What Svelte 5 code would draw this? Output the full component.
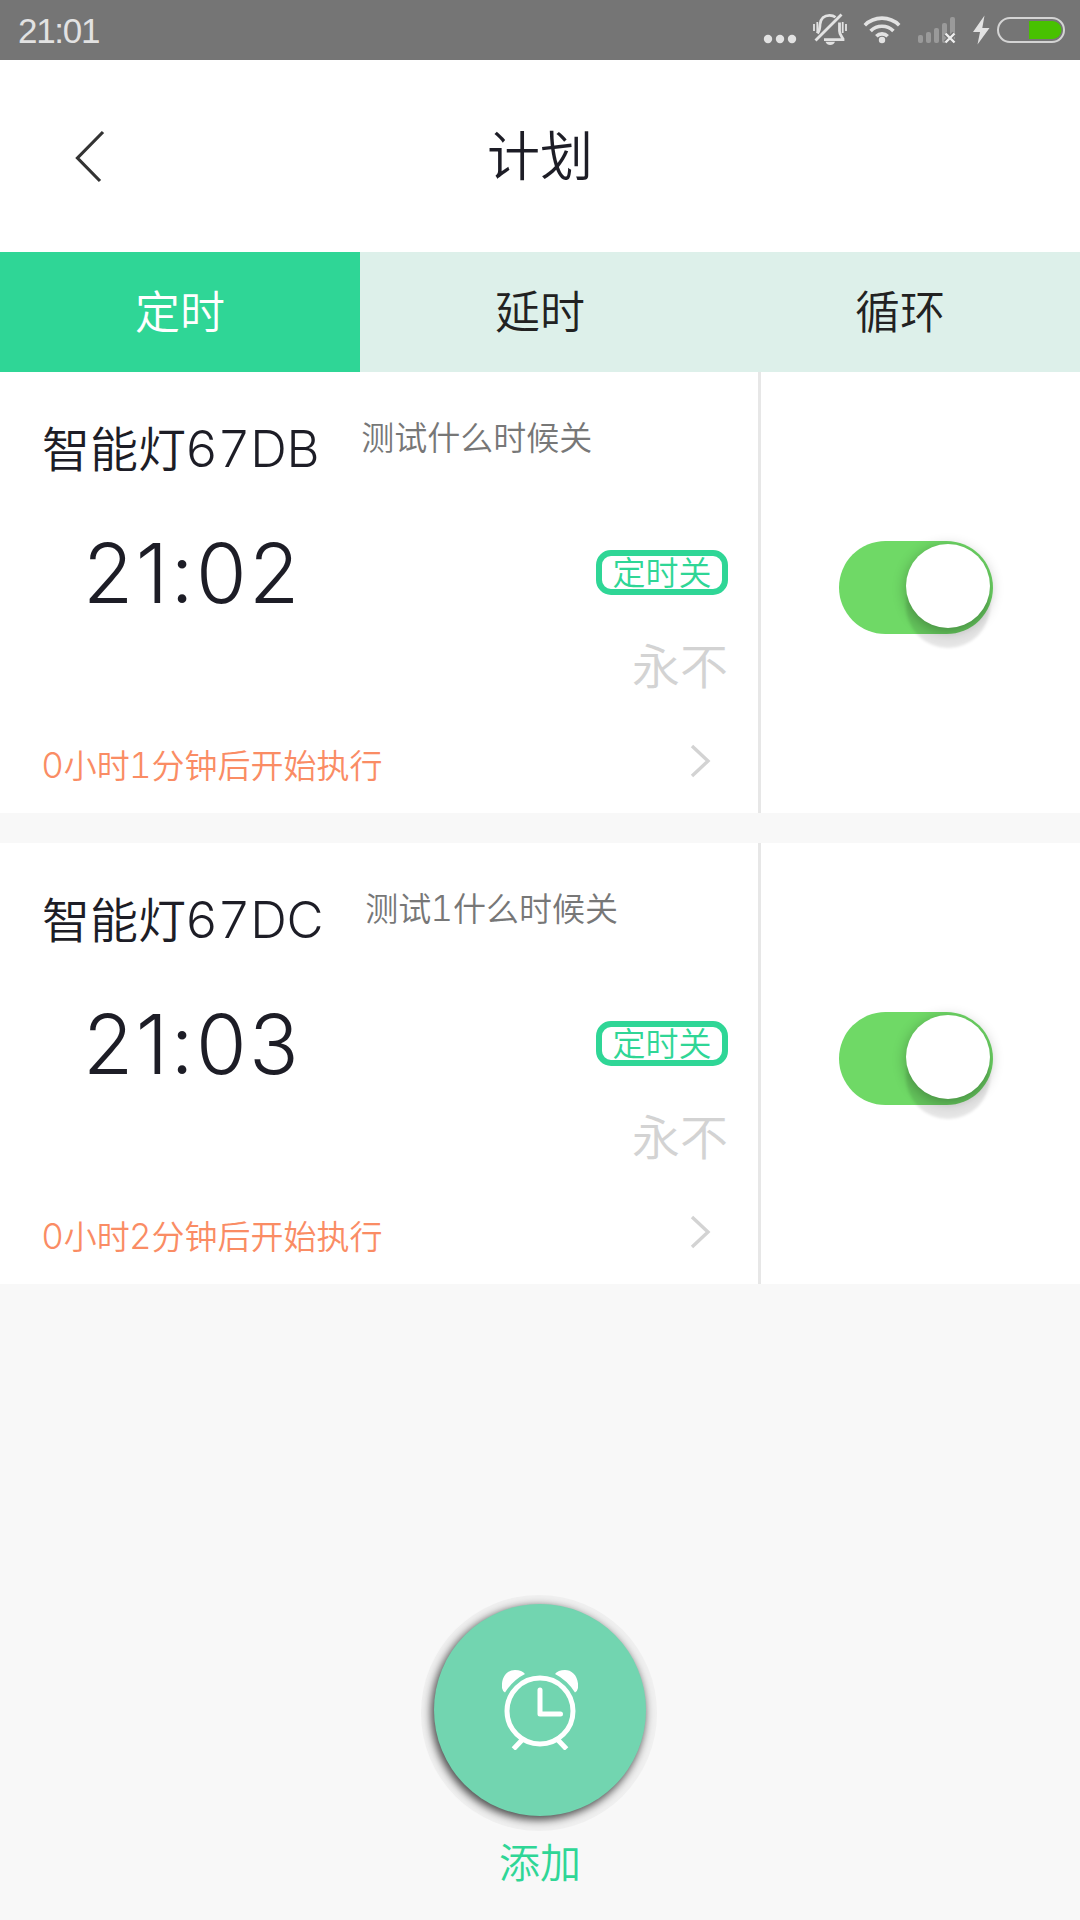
<script>
  const tabs = ['定时', '延时', '循环'];
  let active = $state(0);

  let plans = $state([
    { name: '智能灯67DB', note: '测试什么时候关', time: '21:02', action: '定时关', repeat: '永不', status: '0小时1分钟后开始执行', on: true },
    { name: '智能灯67DC', note: '测试1什么时候关', time: '21:03', action: '定时关', repeat: '永不', status: '0小时2分钟后开始执行', on: true }
  ]);

  // Latin runs use their own face and size beside the Chinese glyphs
  function runs(text) {
    return text.match(/[0-9A-Za-z]+|[^0-9A-Za-z]+/g).map((t) => ({ t, latin: /^[0-9A-Za-z]/.test(t) }));
  }
</script>

{#snippet mixed(text)}{#each runs(text) as r}{#if r.latin}<span class="latin">{r.t}</span>{:else}{r.t}{/if}{/each}{/snippet}

<div class="screen">
  <div class="status">
    <span class="clock">21:01</span>
    <svg class="sys" viewBox="740 0 340 60" width="340" height="60">
      <g fill="#e2e2e2">
        <circle cx="768" cy="39" r="4.2" /><circle cx="780" cy="39" r="4.2" /><circle cx="792" cy="39" r="4.2" />
        <path d="M825.500 41.700h9.500q-1.500 3.300-4.800 3.300t-4.700-3.300z" />
        <circle cx="882" cy="40" r="3.200" />
        <path d="M984.500 15.500L973 32h7l-2.500 12.500L989.500 28h-7.200z" />
      </g>
      <g fill="none" stroke="#e2e2e2" stroke-width="2.800">
        <path d="M817.500 33.500C820 30 820 27 820 24.500C820.500 18.500 824.500 15.300 829.500 15.300C832 15.300 834 16 835.500 17.300M839.500 22.500V31C839.500 34.500 841.500 36 843 38.900V39.600H824" />
        <path d="M841.500 14.500L815.500 40.500" />
        <path d="M814 24v7M817.300 22v11M842.700 22v11M846 24v7" stroke-width="1.800" />
        <path d="M864.800 25.200a24.500 24.500 0 0 1 34.400 0M870.600 31a16.200 16.200 0 0 1 22.800 0M876.300 36.200a8.200 8.200 0 0 1 11.400 0" stroke-width="3.600" />
      </g>
      <g fill="#9a9a9a">
        <rect x="918" y="35" width="5" height="8" rx="2" />
        <rect x="926" y="32" width="5" height="11" rx="2" />
        <rect x="934" y="28" width="5" height="15" rx="2" />
        <rect x="942" y="23" width="5" height="20" rx="2" />
        <rect x="950" y="17" width="5" height="26" rx="2" />
      </g>
      <path d="M945.500 33.500l9 9m0-9l-9 9" stroke="#757575" stroke-width="5" />
      <path d="M945.500 33.500l9 9m0-9l-9 9" stroke="#eee" stroke-width="2.400" />
      <rect x="998" y="18" width="66" height="24" rx="12" fill="none" stroke="#d4d4d4" stroke-width="2" />
      <path d="M1029 21h23.500a9 9 0 0 1 0 18H1029z" fill="#48c100" />
    </svg>
  </div>

  <header>
    <button class="back" aria-label="返回">
      <svg viewBox="0 0 32 56" width="32" height="56"><path d="M29 4L3.500 30L26 53" fill="none" stroke="#333" stroke-width="3.200" /></svg>
    </button>
    <h1>计划</h1>
  </header>

  <nav>
    {#each tabs as tab, i}
      <button class="tab" class:active={active === i} onclick={() => (active = i)}>{tab}</button>
    {/each}
  </nav>

  <main>
    {#each plans as plan}
      <section class="card">
        <div class="info">
          <div class="heading">
            <span class="name">{@render mixed(plan.name)}</span>
            <span class="note">{@render mixed(plan.note)}</span>
          </div>
          <div class="middle">
            <span class="time">{plan.time}</span>
            <span class="badge">{plan.action}</span>
          </div>
          <div class="repeat">{plan.repeat}</div>
          <div class="foot">
            <span class="eta">{@render mixed(plan.status)}</span>
            <svg viewBox="0 0 22 34" width="22" height="34"><path d="M2 2L18 17L2 32" fill="none" stroke="#d3d3d3" stroke-width="3.400" /></svg>
          </div>
        </div>
        <div class="control">
          <button class="switch" class:off={!plan.on} aria-label="开关" onclick={() => (plan.on = !plan.on)}>
            <span class="knob"></span>
          </button>
        </div>
      </section>
    {/each}
  </main>

  <footer>
    <button class="add" aria-label="添加">
      <svg viewBox="502 1670 76 80" width="76" height="80">
        <g fill="#fff">
          <path d="M502 1688C501 1676 508 1670 515 1670Q522 1670 525 1674Q513 1680 505 1692.500Q502.500 1691 502 1688z" />
          <path d="M578 1688C579 1676 572 1670 565 1670Q558 1670 555 1674Q567 1680 575 1692.500Q577.500 1691 578 1688z" />
        </g>
        <g fill="none" stroke="#fff" stroke-width="5">
          <circle cx="540" cy="1711" r="33" />
          <path d="M540 1690V1714H560.500" stroke-linecap="round" stroke-linejoin="round" />
          <path d="M523 1739L513.500 1749M557 1739L566.500 1749" />
        </g>
      </svg>
    </button>
    <span class="addlabel">添加</span>
  </footer>
</div>

<style>
  :global(body) { margin: 0; background: #f8f8f8; }
  .screen {
    width: 1080px; height: 1920px; display: flex; flex-direction: column; overflow: hidden;
    background: #f8f8f8; color: #1d1d26;
    font-family: "Noto Sans CJK SC", sans-serif; font-weight: 350;
  }
  button { border: 0; padding: 0; margin: 0; background: none; font: inherit; color: inherit; }
  svg { display: block; }
  .status { height: 60px; background: #757575; display: flex; justify-content: space-between; align-items: center; flex: none; }
  .clock { padding-left: 18px; font: 400 35px/60px "Liberation Sans", sans-serif; color: #e2e2e2; letter-spacing: -1.3px; padding-top: 1px; }
  header { height: 192px; background: #fff; display: grid; grid-template-columns: 180px 1fr 180px; align-items: center; flex: none; }
  .back { justify-self: start; margin-left: 74px; }
  h1 { margin: 0; padding-bottom: 6px; text-align: center; font-size: 53px; line-height: 80px; font-weight: 350; }
  nav { height: 120px; display: grid; grid-template-columns: repeat(3, 1fr); background: #ddf0ea; flex: none; }
  .tab { font-size: 45px; line-height: 116px; padding-bottom: 4px; color: #222; }
  .tab.active { background: #2fd696; color: #fff; }
  main { display: flex; flex-direction: column; gap: 30px; flex: none; }
  .card { height: 441px; display: flex; background: #fff; }
  .info { width: 758px; border-right: 3px solid #e7e7e7; }
  .heading { display: flex; gap: 42px; padding: 38px 0 1px 42px; white-space: nowrap; height: 72px; }
  .name { font-size: 48px; line-height: 72px; }
  .note { font-size: 33px; line-height: 52px; color: #777; }
  .latin { font-family: Inter, sans-serif; font-size: 1.06em; line-height: 1; font-variant-numeric: tabular-nums; font-weight: 300; letter-spacing: -0.006em; margin-left: -0.02em; }
  .middle { display: flex; justify-content: space-between; align-items: center; padding: 30px 30px 0 83px; height: 118px; }
  .time { padding-top: 3px; font-family: Inter, sans-serif; font-size: 82px; line-height: 100px; font-feature-settings: "calt" 0; font-weight: 350; letter-spacing: 2.4px; }
  .badge { box-sizing: border-box; width: 132px; height: 45px; border: 6px solid #2fd696; border-radius: 15px; color: #2fd696; font-size: 33px; line-height: 30px; text-align: center; }
  .repeat { padding-right: 30px; text-align: right; font-size: 48px; line-height: 64px; color: #d3d3d3; }
  .foot { display: flex; justify-content: space-between; align-items: center; padding: 44px 46px 0 42px; }
  .foot svg { margin-bottom: 6px; }
  .eta { font-size: 33px; line-height: 50px; color: #fa8c64; }
  .control { flex: 1; padding: 169px 0 0 78px; }
  .switch { width: 154px; height: 93px; border-radius: 47px; background: #6fd966; display: flex; justify-content: flex-end; padding: 3px 3px 0 0; box-sizing: border-box; }
  .switch.off { background: #ddd; justify-content: flex-start; }
  .knob { width: 84px; height: 84px; border-radius: 50%; background: #fff; box-shadow: 0 20px 3px 0 rgba(0, 0, 0, 0.1), 0 3px 14px rgba(0, 0, 0, 0.3); }
  footer { flex: 1; display: flex; flex-direction: column; align-items: center; padding-top: 320px; }
  .add { width: 212px; height: 212px; border-radius: 50%; background: #72d5b0; display: flex; align-items: center; justify-content: center; box-shadow: -2px 3px 9px 1px rgba(0, 0, 0, 0.68), -1px 3px 0 12px #f0f0f0; flex: none; }
  .addlabel { margin-top: 14px; font-size: 41px; line-height: 60px; color: #2fd696; }
</style>
